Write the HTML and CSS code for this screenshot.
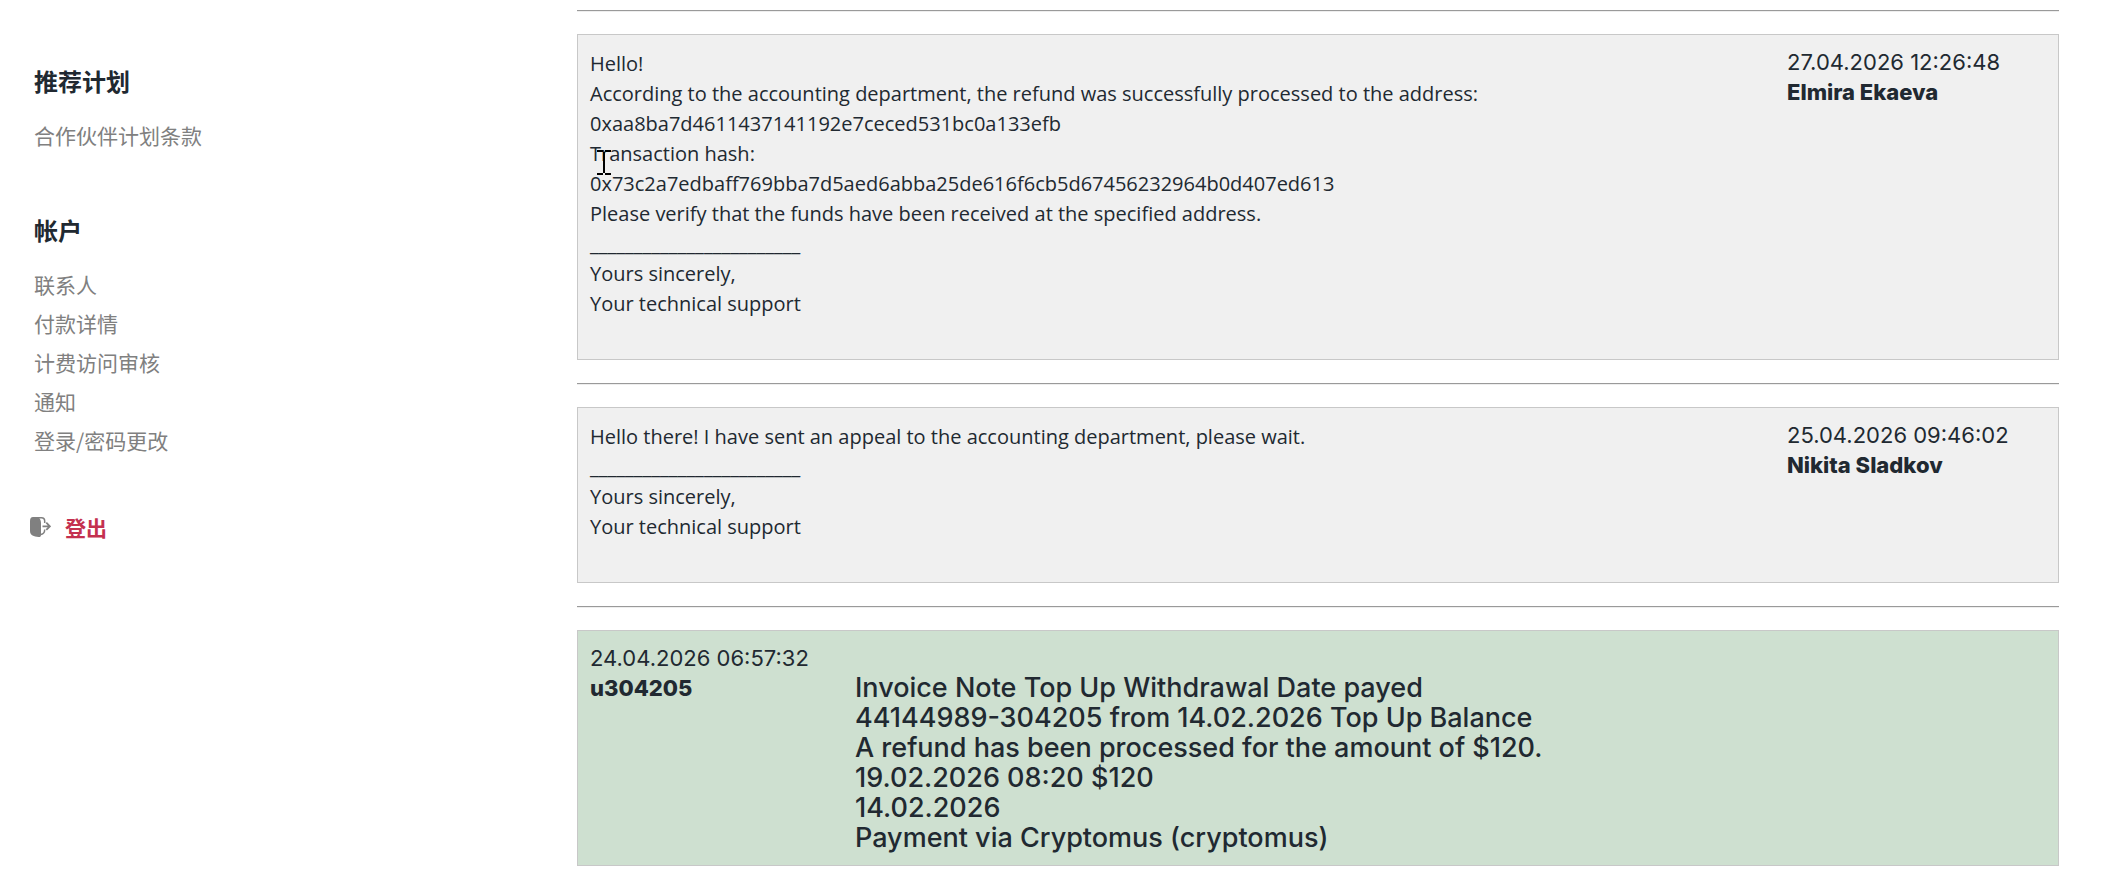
FILE: index.html
```html
<!DOCTYPE html>
<html lang="zh-CN">
<head>
<meta charset="utf-8">
<meta name="viewport" content="width=device-width, initial-scale=1">
<title>Support ticket</title>
<link rel="stylesheet" href="styles.css">
</head>
<body>
<div class="page">
  <nav class="sidebar">
    <section class="menu-group">
      <h2 class="menu-title">推荐计划</h2>
      <ul class="menu-list">
        <li><a href="#">合作伙伴计划条款</a></li>
      </ul>
    </section>
    <section class="menu-group">
      <h2 class="menu-title">帐户</h2>
      <ul class="menu-list">
        <li><a href="#">联系人</a></li>
        <li><a href="#">付款详情</a></li>
        <li><a href="#">计费访问审核</a></li>
        <li><a href="#">通知</a></li>
        <li><a href="#">登录/密码更改</a></li>
      </ul>
    </section>
    <a class="logout" href="#">
      <svg class="logout-icon" viewBox="0 0 22 22" aria-hidden="true">
        <path d="M4 1h3c3.500 .3 5 2.500 5 6v12c0 1.700-1 2.200-2.500 2C5 20.500 1 19.500 1 15V5c0-2.700 1-4 3-4z" fill="#808080"/>
        <path d="M7 1.700h5.500c2 0 3.200 1.200 3.200 3.300V7M15.700 13.500c0 3-1.200 4.500-3.700 5" fill="none" stroke="#808080" stroke-width="1.500"/>
        <path d="M13.500 10.300h7M17.300 6.700l3.600 3.600-3.600 3.600" fill="none" stroke="#808080" stroke-width="1.800"/>
      </svg>
      <span>登出</span>
    </a>
  </nav>
  <main class="thread">
    <hr class="divider">
    <article class="ticket ticket-staff">
      <div class="message">Hello!<br>
According to the accounting department, the refund was successfully processed to the address:<br>
0xaa8ba7d4611437141192e7ceced531bc0a133efb<br>
Transaction hash:<br>
0x73c2a7edbaff769bba7d5aed6abba25de616f6cb5d67456232964b0d407ed613<br>
Please verify that the funds have been received at the specified address.<br>
________________________<br>
Yours sincerely,<br>
Your technical support</div>
      <div class="author">
        <time>27.04.2026 12:26:48</time>
        <strong>Elmira Ekaeva</strong>
      </div>
      <svg class="caret" viewBox="0 0 14 25" aria-hidden="true">
        <path d="M0 1h6M8 1h6M7 2v21M0 24h6M8 24h6" fill="none" stroke="#000" stroke-width="2"/>
      </svg>
    </article>
    <hr class="divider">
    <article class="ticket ticket-staff">
      <div class="message">Hello there! I have sent an appeal to the accounting department, please wait.<br>
________________________<br>
Yours sincerely,<br>
Your technical support</div>
      <div class="author">
        <time>25.04.2026 09:46:02</time>
        <strong>Nikita Sladkov</strong>
      </div>
    </article>
    <hr class="divider">
    <article class="ticket ticket-client">
      <div class="author">
        <time>24.04.2026 06:57:32</time>
        <strong>u304205</strong>
      </div>
      <div class="message"><br>
Invoice Note Top Up Withdrawal Date payed<br>
44144989-304205 from 14.02.2026 Top Up Balance<br>
A refund has been processed for the amount of $120.<br>
19.02.2026 08:20 $120<br>
14.02.2026<br>
Payment via Cryptomus (cryptomus)</div>
    </article>
  </main>
</div>
</body>
</html>
```
FILE: styles.css
```css
* {
  box-sizing: border-box;
}

body {
  margin: 0;
  background: #fff;
  color: #212931;
  font-family: Inter, "Noto Sans CJK SC", sans-serif;
  font-size: 22px;
  line-height: 30px;
}

.page {
  display: flex;
}

.sidebar {
  flex: 0 0 577px;
  padding: 66px 34px 0;
  font-family: "Noto Sans CJK SC", sans-serif;
}

.menu-group {
  margin-bottom: 60px;
}

.menu-title {
  margin: 0 0 20px;
  font-size: 24px;
  font-weight: 700;
}

.menu-list {
  margin: 0;
  padding: 0;
  list-style: none;
  font-size: 21px;
  line-height: 39px;
}

.menu-list a {
  color: #808080;
  text-decoration: none;
}

.logout {
  display: flex;
  align-items: center;
  gap: 14px;
  margin: -8px 0 0 -5px;
  color: #c4304f;
  font-size: 21px;
  font-weight: 700;
  text-decoration: none;
}

.logout-icon {
  width: 22px;
  height: 22px;
}

.thread {
  flex: 1;
  min-width: 0;
  padding: 10px 60px 22px 0;
}

.divider {
  height: 2px;
  margin: 0 0 22px;
  border: 0;
  border-top: 1px solid #9a9a9a;
  border-bottom: 1px solid #eee;
}

.ticket {
  position: relative;
  display: flex;
  margin-bottom: 23px;
  padding: 12px;
  border: 1px solid #c8c8c8;
}

.ticket-staff {
  background: #f0f0f0;
}

.ticket-client {
  background: #cee0d0;
}

.message {
  flex: 1;
  min-width: 0;
  overflow-wrap: anywhere;
}

.ticket-staff .message {
  padding: 2px 0 28px;
  font-family: "Open Sans", sans-serif;
  font-size: 20px;
}

.ticket-client .message {
  font-size: 27px;
  font-weight: 500;
}

.author {
  display: flex;
  flex-direction: column;
}

.author strong {
  font-weight: 800;
}

.ticket-staff .author {
  flex: 0 0 259px;
}

.ticket-client .author {
  flex: 0 0 265px;
}

.caret {
  position: absolute;
  top: 115px;
  left: 19px;
  width: 14px;
  height: 25px;
}
```
